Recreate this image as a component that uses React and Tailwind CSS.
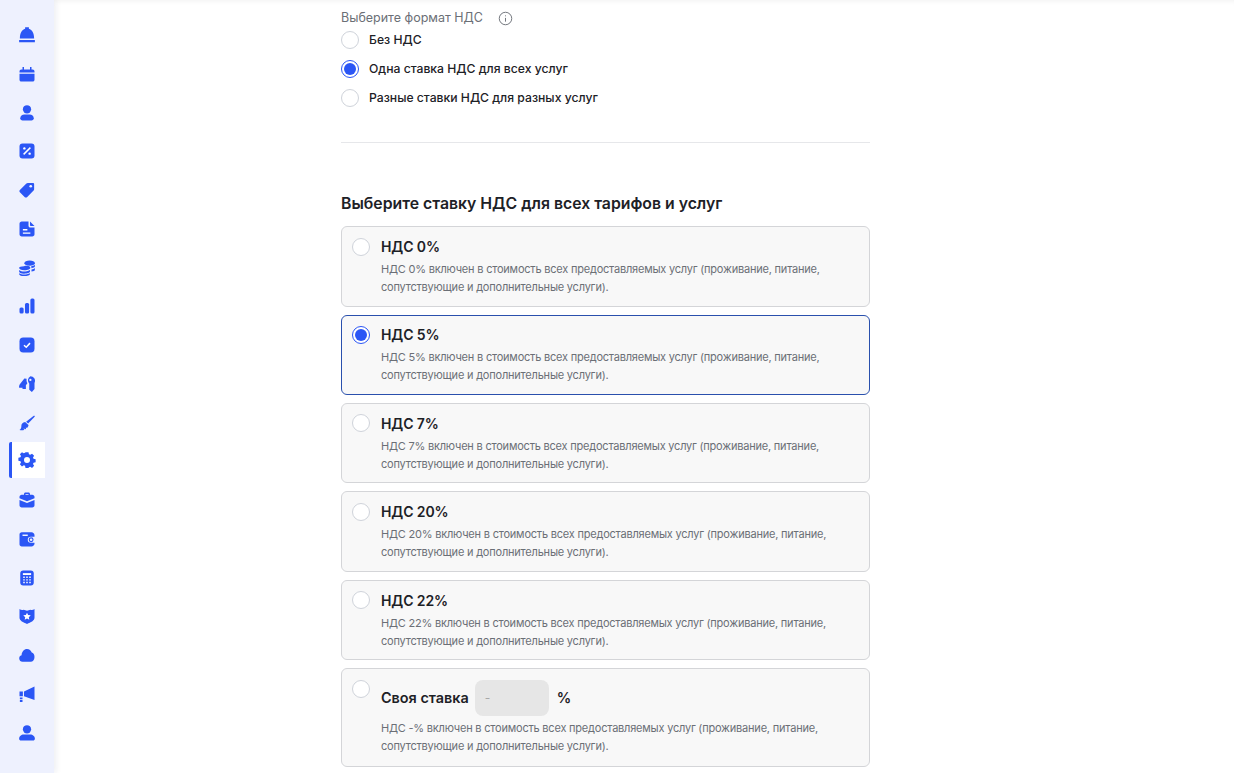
const blue = '#2b56f5'

const Svg = ({ children, size = 18 }) => (
  <svg width={size} height={size} viewBox="0 0 24 24" fill={blue}>{children}</svg>
)

const icons = [
  <Svg><path d="M9.500 1.500h5v2.200c4.300 1.200 7 5.800 7 13H2.500c0-7.200 2.700-11.800 7-13zM1.500 18.500h21v3h-21z" /></Svg>,
  <Svg><path d="M2 8.500c0-1.400 1-2.500 2.500-2.500H6V2.500h2V6h8V2.500h2V6h1.500C21 6 22 7.100 22 8.500V10H2zM2 11.500h20v8c0 1.400-1 2.500-2.500 2.500h-15C3 22 2 20.900 2 19.500z" /></Svg>,
  <Svg><circle cx="12" cy="7" r="5.500" /><path d="M3 19c0-3 2.500-5 5.500-5h7c3 0 5.500 2 5.500 5 0 1.700-1.300 3-3 3H6c-1.700 0-3-1.300-3-3z" /></Svg>,
  <Svg><rect x="2" y="2" width="20" height="20" rx="4" /><path d="M7.500 16.500l9-9" stroke="#fff" strokeWidth="2" /><circle cx="8.500" cy="8.500" r="1.600" fill="#fff" /><circle cx="15.500" cy="15.500" r="1.600" fill="#fff" /></Svg>,
  <Svg><path d="M13 2.500h7c.8 0 1.500.7 1.500 1.500v7c0 .7-.3 1.300-.7 1.800L12 21.500c-.8.800-2.100.800-2.900 0L2.500 15c-.8-.8-.8-2.100 0-2.900l8.700-8.800c.5-.5 1.100-.8 1.800-.8z" /><circle cx="17" cy="7" r="1.800" fill="#eef1fe" /></Svg>,
  <Svg><path d="M5 2h9v5.500c0 1.400 1.100 2.500 2.500 2.500H22v9c0 1.700-1.300 3-3 3H5c-1.700 0-3-1.300-3-3V5c0-1.700 1.300-3 3-3zM16 2l6 6h-5c-.6 0-1-.4-1-1z" /><path d="M6.500 13h6M6.500 17.500h10" stroke="#fff" strokeWidth="1.800" /></Svg>,
  <Svg><ellipse cx="15.500" cy="5.500" rx="7" ry="3.500" /><path d="M8 9.500c3.500-1 8-.5 8.500 2 0 1.500-3 3.500-8 3.500-4.400 0-7-1.500-7-3.300 0-1.200 2.500-2 6.500-2.200zM1.500 14.500c2 1.500 4 2 6.500 2s5-.5 8-2v2.200c0 1.700-3.500 2.800-8 2.800s-6.500-1.200-6.500-2.800zM1.500 19c2 1.300 4 1.800 6.500 1.800s5.500-.5 8-1.800v1c0 1.600-3.500 2.800-8 2.800s-6.500-1.200-6.500-2.800zM17.500 9.500c2-.3 4-1 5-2v2.500c0 1-2 1.800-4.500 2.200zM18 14c2-.4 3.700-1 4.500-2v2.500c0 1-1.800 1.800-4.500 2.200z" /></Svg>,
  <Svg><rect x="2" y="14" width="5.500" height="8" rx="2" /><rect x="9.300" y="8" width="5.500" height="14" rx="2" /><rect x="16.500" y="2" width="5.500" height="20" rx="2" /></Svg>,
  <Svg><rect x="2" y="2" width="20" height="20" rx="5" /><path d="M8 12.300l3 2.700 5-5.500" fill="none" stroke="#fff" strokeWidth="2" /></Svg>,
  <Svg><path d="M8.500 4.500l3 .5c-.3 2.500 0 4.500 1 6l-2 2.500v5H6v-1.500H1.500c-.3-1.800.2-3.500 1.200-5z" /><path d="M16.500 1.500a6.200 6.200 0 0 1 5.500 9v8L18.500 22.500l-3.500-3v-8.300a6.200 6.200 0 0 1 1.500-9.700z" /><circle cx="16.500" cy="6.500" r="1.500" fill="#eef1fe" /></Svg>,
  <Svg><path d="M21.500 2l1 1.200-9 9.500-2.700-2.500z" /><path d="M9.500 10.500l4.500 4c-.2 2-1 3.200-2.300 4l-1.200-1 .2 2.200-1.500.9-1.500-1.900.3 2.600c-1.700.5-3.700.5-6 .1 2-1.500 2.500-3 2.500-5.400C4 13.800 6.300 11 9.500 10.500z" /></Svg>,
  <Svg><path fillRule="evenodd" d="M10 2h4l.6 2.800 1.700.7 2.400-1.500 2.800 2.800-1.500 2.400.7 1.700L23.500 11.500v4l-2.800.6-.7 1.700 1.500 2.400-2.800 2.800-2.400-1.500-1.700.7L14 23h-4l-.6-2.800-1.700-.7-2.400 1.500-2.800-2.800 1.500-2.400-.7-1.700L.500 13.500v-4l2.800-.6.700-1.700L2.500 4.800 5.300 2l2.400 1.500 1.700-.7zM12 8.500a4 4 0 1 0 0 8 4 4 0 0 0 0-8z" transform="translate(0 -.5)" /></Svg>,
  <Svg><path d="M8 5V4c0-1.100.9-2 2-2h4c1.100 0 2 .9 2 2v1h3c1.700 0 3 1.300 3 3v1.500l-10 4-10-4V8c0-1.700 1.300-3 3-3zm2 0h4V4h-4zM2 12l10 4 10-4v7c0 1.700-1.300 3-3 3H5c-1.700 0-3-1.300-3-3z" /></Svg>,
  <Svg><path d="M5 3h13c2.200 0 4 1.800 4 4v2h-5a4 4 0 0 0 0 8h5v1c0 2.200-1.800 4-4 4H5c-1.700 0-3-1.300-3-3V6c0-1.700 1.300-3 3-3z" /><path d="M6 7h7" stroke="#fff" strokeWidth="1.800" /><circle cx="17.500" cy="13" r="2.500" fill="none" stroke={blue} strokeWidth="1.500" /></Svg>,
  <Svg><rect x="3" y="2" width="18" height="20" rx="4" /><path d="M6.500 5.500h11v2.500h-11z" fill="#fff" /><path d="M7 11h2M11 11h2M15 11h2M7 14.500h2M11 14.500h2M15 14.500h2M7 18h2M11 18h2M15 18h2" stroke="#fff" strokeWidth="1.800" /></Svg>,
  <Svg><path d="M2 2.500c1.500 1.300 3.500 1.700 5.500 1L12 5l4.500-1.500c2 .7 4 .3 5.500-1V14c0 4.500-5 6.500-10 8.500C7 20.500 2 18.500 2 14z" /><path d="M12 7.500l1.500 3.200 3.500.4-2.600 2.400.7 3.500-3.100-1.800-3.100 1.800.7-3.500L7 11.100l3.500-.4z" fill="#fff" /></Svg>,
  <Svg><path d="M6 21a4.500 4.500 0 0 1-1.200-8.800C5 7.500 8.200 4 12 4c3 0 5.500 2 6.300 4.800 2.300.6 3.700 2.800 3.700 5.700 0 3.800-2.300 6.500-5 6.500z" /></Svg>,
  <Svg><path d="M8 8.500L22 2v18L8 15zM2 8.500h4.500V15H2zM2.500 16.500h3.500v2.500H2.500zM2.500 20h3.500v2.500H2.500z" /></Svg>,
  <Svg><circle cx="12" cy="7" r="5.500" /><path d="M1.500 19.500c0-3 3-5.500 6-5.500h9c3 0 6 2.500 6 5.500 0 1.400-1.100 2.500-2.500 2.500H4c-1.400 0-2.500-1.100-2.500-2.500z" /></Svg>,
]

const rates = ['0', '5', '7', '20', '22']

function Radio({ checked }) {
  return (
    <span className={`flex w-[18px] h-[18px] shrink-0 items-center justify-center rounded-full border bg-white ${checked ? 'border-[#2b56f5]' : 'border-[#cfd3da]'}`}>
      {checked && <span className="w-3 h-3 rounded-full bg-[#2b56f5]" />}
    </span>
  )
}

function Desc({ value }) {
  return (
    <p className="text-[11px] leading-[18px] tracking-[-0.21px] text-[#6b6f76]">
      {`НДС ${value}% включен в стоимость всех предоставляемых услуг (проживание, питание, сопутствующие и дополнительные услуги).`}
    </p>
  )
}

export default function App() {
  return (
    <div className="flex h-screen overflow-hidden bg-white font-['Inter',sans-serif] text-[#1d2126]">
      <aside className="w-[54px] shrink-0 h-full bg-[#eef1fe] shadow-[2px_0_6px_rgba(30,40,90,0.08)] pt-[16px] pl-[9px] flex flex-col gap-[2.750px] z-10">
        {icons.map((icon, i) => (
          <div key={i} className={`w-9 h-9 shrink-0 flex items-center justify-center ${i === 11 ? 'bg-white border-l-[3px] border-[#2b56f5] rounded-l-[2px] pr-[3px]' : 'pt-[2px]'}`}>
            {icon}
          </div>
        ))}
      </aside>

      <main className="flex-1 h-full shadow-[inset_0_6px_6px_-6px_rgba(0,0,0,0.08)] pl-[287px] pt-[9px]">
        <div className="w-[529px]">
          <div className="flex items-center gap-[15px] h-[18px] text-[12.500px] text-[#6b6f76]">
            Выберите формат НДС
            <svg width="15" height="15" viewBox="0 0 24 24" fill="none" stroke="#6b6f76" strokeWidth="1.500">
              <circle cx="12" cy="12" r="10" />
              <path d="M12 11v6M12 7v1.500" />
            </svg>
          </div>
          <div className="mt-[4px] flex flex-col gap-[11px]">
            {['Без НДС', 'Одна ставка НДС для всех услуг', 'Разные ставки НДС для разных услуг'].map((label, i) => (
              <label key={label} className="flex items-center gap-[10px] h-[18px] text-[12.200px] font-medium">
                <Radio checked={i === 1} />
                {label}
              </label>
            ))}
          </div>
          <div className="mt-[35px] border-t border-[#e6e7ea]" />
          <h2 className="mt-[50px] text-[15.800px] leading-[22px] font-semibold">Выберите ставку НДС для всех тарифов и услуг</h2>
          <div className="mt-[11.300px] flex flex-col gap-2">
            {rates.map((r) => (
              <div key={r} className={`flex gap-[11px] rounded-md border px-[10px] pt-[8.800px] pb-[9.600px] bg-[#f8f8f8] ${r === '5' ? 'border-[#2a50ad]' : 'border-[#d4d5d8]'}`}>
                <div className="pt-[1.500px]"><Radio checked={r === '5'} /></div>
                <div>
                  <div className="text-[14px] tracking-[-0.1px] leading-[22px] font-semibold mb-[2px]">{`НДС ${r}%`}</div>
                  <Desc value={r} />
                </div>
              </div>
            ))}
            <div className="flex gap-[11px] rounded-md border border-[#d4d5d8] px-[10px] pt-[11px] pb-[11px] bg-[#f8f8f8]">
              <Radio />
              <div>
                <div className="flex items-center h-9 text-[14.400px] font-semibold mb-[3px]">
                  Своя ставка
                  <span className="ml-[6px] w-[74px] h-9 rounded-lg bg-[#e6e6e6] px-[10px] flex items-center text-[#a8a8a8] font-normal text-[12px]">-</span>
                  <span className="ml-[8px]">%</span>
                </div>
                <Desc value="-" />
              </div>
            </div>
          </div>
        </div>
      </main>
    </div>
  )
}
